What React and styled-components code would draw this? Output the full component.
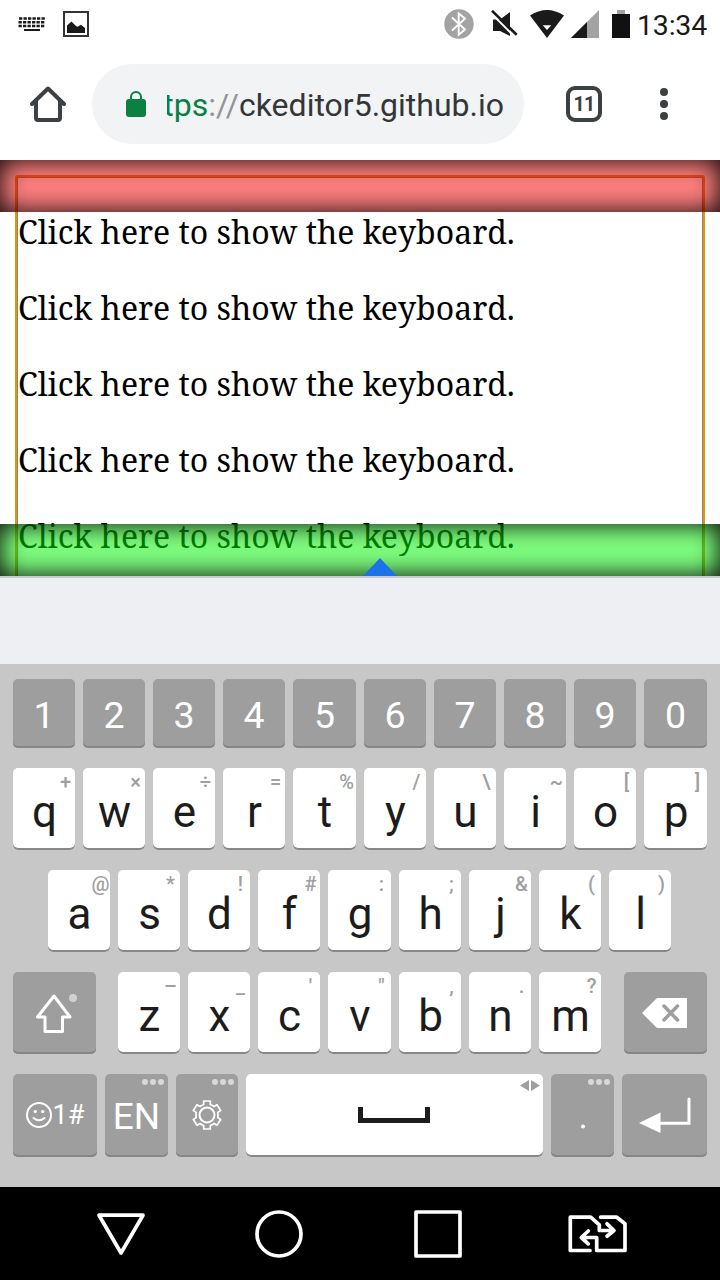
import React from "react";
import styled, { createGlobalStyle, css } from "styled-components";

const GlobalStyle = createGlobalStyle`
  *, *::before, *::after { box-sizing: border-box; }
  body { margin: 0; background: #fff; font-family: Roboto, sans-serif; }
  svg { display: block; flex: none; }
`;

const Screen = styled.div`
  width: 720px;
  height: 1280px;
  display: flex;
  flex-direction: column;
  overflow: hidden;
`;

const StatusBar = styled.header`
  height: 48px;
  display: flex;
  align-items: center;
  justify-content: space-between;
  padding: 0 12px 0 18px;
  color: #1a1a1a;
`;

const Notifications = styled.div`
  display: flex;
  align-items: center;
  gap: 17px;
`;

const SystemIcons = styled.div`
  display: flex;
  align-items: center;
`;

const IconGap = styled.span`
  width: ${(p) => p.$w}px;
`;

const Clock = styled.time`
  margin-left: 7px;
  font-size: 28.5px;
  line-height: 48px;
  height: 48px;
  width: 71px;
  padding-top: 1.5px;
  white-space: nowrap;
  letter-spacing: -0.2px;
`;

const Toolbar = styled.nav`
  height: 112px;
  display: flex;
  align-items: center;
  padding: 0 50px 0 30px;
`;

const AddressBar = styled.div`
  width: 432px;
  height: 80px;
  margin-left: 26px;
  padding: 0 20px 0 34px;
  border-radius: 40px;
  background: #f1f3f4;
  display: flex;
  align-items: center;
`;

const Url = styled.div`
  width: 337px;
  margin-left: 21px;
  overflow: hidden;
  display: flex;
  justify-content: flex-end;
  font-size: 32px;
  line-height: 44px;
  padding-top: 2px;
  color: #333639;
  white-space: nowrap;
`;

const Scheme = styled.span`
  color: #0b8043;
`;

const Slashes = styled.span`
  color: #919395;
`;

const TabCount = styled.div`
  width: 36px;
  height: 36px;
  margin-left: 42px;
  border: 4px solid #3c4043;
  border-radius: 9px;
  color: #3c4043;
  font-size: 19.5px;
  font-weight: 700;
  letter-spacing: -0.8px;
  line-height: 29px;
  text-align: center;
`;

const Menu = styled.div`
  margin-left: 58px;
  display: flex;
  flex-direction: column;
  gap: 4px;
`;

const MenuDot = styled.span`
  width: 8px;
  height: 8px;
  border-radius: 50%;
  background: #3c4043;
`;

const Page = styled.main`
  position: relative;
  height: 416px;
  padding: 15px 15px 0;
  overflow: hidden;
`;

const Editable = styled.div`
  height: 480px;
  border: 2px solid #e59700;
  border-radius: 3px;
  box-shadow: inset 0 0 0 1px #858585;
  padding: 33px 1px 0;
`;

const Paragraph = styled.p`
  margin: 0 0 32px;
  height: 44px;
  font-family: "Noto Serif", "Droid Serif", "DejaVu Serif Condensed", "DejaVu Serif", serif;
  font-size: 32px;
  line-height: 44px;
  color: #000;
  white-space: nowrap;
`;

const Band = styled.div`
  position: absolute;
  left: 0;
  right: 0;
  height: 52px;
  ${(p) => (p.$edge === "top" ? "top: 0;" : "bottom: 0;")}
  background: ${(p) => p.$color};
  box-shadow: inset 0 0 26px #000;
`;

const Handle = styled.svg`
  position: absolute;
  left: 363px;
  bottom: 0;
`;

const Suggestions = styled.div`
  height: 88px;
  border-top: 2px solid #c9c9d1;
  background: #eeeff3;
`;

const Keyboard = styled.section`
  height: 523px;
  padding: 15px 13px 0;
  background: #c7c7c7;
  display: flex;
  flex-direction: column;
  gap: 20px;
`;

const KeyRow = styled.div`
  display: grid;
  grid-template-columns: ${(p) => p.$columns || "repeat(4, 62px) 63px repeat(4, 62px) 63px"};
  column-gap: 8px;
  height: ${(p) => p.$height || 82}px;
  padding-left: ${(p) => p.$indent || 0}px;
`;

const Key = styled.div`
  position: relative;
  display: flex;
  align-items: center;
  justify-content: center;
  border-radius: 5px;
  background: #fff;
  color: #1c1c1c;
  box-shadow: inset 0 -2px 0 #888;
  font-size: 44px;
  line-height: 48px;
  padding: 6px 0 0 1px;
  ${(p) =>
    p.$dark &&
    css`
      background: #9e9e9e;
      color: #fff;
      box-shadow: inset 0 -2px 0 #868686;
      font-size: ${p.$size || 37.5}px;
      padding: 2px 0 0;
    `}
  ${(p) =>
    p.$icon &&
    css`
      padding: 0 ${p.$right || 0}px 1px ${p.$left || 0}px;
    `}
`;

const Hint = styled.span`
  position: absolute;
  top: 2px;
  right: -0.5px;
  width: 20px;
  display: flex;
  justify-content: center;
  font-size: 20px;
  line-height: 24px;
  font-weight: 500;
  color: #a0a0a0;
`;

const Dots = styled.span`
  position: absolute;
  top: 5px;
  right: 4px;
  display: flex;
  gap: 2px;
`;

const Dot = styled.i`
  width: 6px;
  height: 6px;
  border-radius: 50%;
  background: #d9d9d9;
`;

const SpaceArrows = styled.svg`
  position: absolute;
  top: 6px;
  right: 3px;
`;

const SymbolLabel = styled.span`
  margin-left: 1px;
  font-size: 27px;
  font-weight: 400;
`;

const NavBar = styled.footer`
  height: 93px;
  background: #000;
  display: flex;
  align-items: center;
  padding-left: 96px;
`;

const NavSvg = styled.svg`
  margin-right: ${(p) => p.$after || 0}px;
`;

const digits = "1234567890".split("");
const topRow = [["q", "+"], ["w", "×"], ["e", "÷"], ["r", "="], ["t", "%"], ["y", "/"], ["u", "\\"], ["i", "~"], ["o", "["], ["p", "]"]];
const homeRow = [["a", "@"], ["s", "*"], ["d", "!"], ["f", "#"], ["g", ":"], ["h", ";"], ["j", "&"], ["k", "("], ["l", ")"]];
const bottomRow = [["z", "–"], ["x", "_"], ["c", "'"], ["v", '"'], ["b", ","], ["n", "."], ["m", "?"]];

const LetterKey = ({ letter, hint }) => (
  <Key>
    {letter}
    <Hint>{hint}</Hint>
  </Key>
);

const MoreDots = () => (
  <Dots>
    <Dot />
    <Dot />
    <Dot />
  </Dots>
);

const KeyboardIcon = () => (
  <svg width="28" height="16" viewBox="0 0 28 16">
    <path d="M1 2.5h27M.5 6.2h27M.5 10h27" stroke="#1a1a1a" strokeWidth="2.6" strokeDasharray="3.3 1.2" />
    <path d="M6 14h16" stroke="#1a1a1a" strokeWidth="2" />
  </svg>
);

const PictureIcon = () => (
  <svg width="26" height="26" viewBox="0 0 26 26">
    <rect x="1" y="1" width="24" height="24" fill="none" stroke="#333" strokeWidth="2" />
    <path d="M4 22v-7.500L8.500 10.500l4.500 4.500 1.500.8 3.500-2 4 3.200V22z" fill="#1a1a1a" />
  </svg>
);

const BluetoothIcon = () => (
  <svg width="30" height="30" viewBox="0 0 30 30">
    <circle cx="15" cy="15" r="14.700" fill="#a3a3a3" />
    <path d="M8 8.500l13 12-6.300 5.200V4.500L21 9.600 8 21.500" fill="none" stroke="#fff" strokeWidth="1.900" />
  </svg>
);

const MuteIcon = () => (
  <svg width="27" height="28" viewBox="0 0 27 28">
    <path d="M2 9.500H9L19 2V26L9 21H2z" fill="#1a1a1a" />
    <path d="M-2 1.200L24 27.200" stroke="#fff" strokeWidth="2" />
    <path d="M1 .8L25.700 24.800" stroke="#1a1a1a" strokeWidth="2.600" />
  </svg>
);

const WifiIcon = () => (
  <svg width="34" height="28" viewBox="0 0 34 28">
    <path d="M0 5.500Q17-5.500 34 5.500L17 28z" fill="#1a1a1a" />
    <path d="M12.800 15.300H21.200L17 20z" fill="#fff" />
  </svg>
);

const SignalIcon = () => (
  <svg width="28" height="28" viewBox="0 0 28 28">
    <path d="M28 0v28H0z" fill="#a3a3a3" />
    <path d="M16 12v16H0z" fill="#1a1a1a" />
  </svg>
);

const BatteryIcon = () => (
  <svg width="18" height="28" viewBox="0 0 18 28">
    <path d="M5 0h8v4H5z" fill="#a3a3a3" />
    <path d="M0 4h18v24H0z" fill="#111" />
  </svg>
);

const HomeIcon = () => (
  <svg width="36" height="36" viewBox="0 0 36 36">
    <path d="M2 18L18 2.500 34 18M6 15.500V32q0 2 2 2h20q2 0 2-2V15.500" fill="none" stroke="#3c4043" strokeWidth="4" strokeLinejoin="round" strokeLinecap="round" />
  </svg>
);

const LockIcon = () => (
  <svg width="20" height="26" viewBox="0 0 20 26">
    <rect y="8" width="20" height="18" rx="3" fill="#0b8043" />
    <path d="M5 9V6a5 5 0 0 1 10 0v3" fill="none" stroke="#0b8043" strokeWidth="2" />
  </svg>
);

const ShiftIcon = () => (
  <svg width="44" height="42" viewBox="0 0 44 42">
    <path d="M19 4L2.500 25H10v14.500h17.500V25H35z" fill="none" stroke="#fff" strokeWidth="3" strokeLinejoin="round" />
    <circle cx="38" cy="6" r="4" fill="#d0d0d0" />
  </svg>
);

const BackspaceIcon = () => (
  <svg width="45" height="30" viewBox="0 0 45 30">
    <path d="M0 15L15 0h30v30H15z" fill="#fff" />
    <path d="M22 8L35.500 22M35.500 8L22 22" stroke="#9e9e9e" strokeWidth="3.500" strokeLinecap="round" />
  </svg>
);

const SmileIcon = () => (
  <svg width="26" height="26" viewBox="0 0 26 26">
    <circle cx="13" cy="13" r="12" fill="none" stroke="#fff" strokeWidth="2" />
    <circle cx="9.300" cy="9.600" r="1.700" fill="#fff" />
    <circle cx="16.700" cy="9.600" r="1.700" fill="#fff" />
    <path d="M7.500 16q5.500 4.500 11 0" fill="none" stroke="#fff" strokeWidth="2" strokeLinecap="round" />
  </svg>
);

const GearIcon = () => (
  <svg width="30" height="30" viewBox="0 0 30 30">
    <path d="M11.700 1h6.600v3.500q2.200.7 3.700 2L25 4.700 28.700 10.500 25.800 12.400q.5 2.600 0 5.200l2.900 1.900L25 25.300l-3-1.800q-1.500 1.300-3.700 2V29h-6.600v-3.500q-2.200-.7-3.700-2l-3 1.800L1.300 19.500l2.900-1.900q-.5-2.600 0-5.200L1.300 10.500 5 4.700l3 1.800q1.500-1.300 3.700-2z" fill="none" stroke="#fff" strokeWidth="1.700" strokeLinejoin="round" />
    <circle cx="15" cy="15" r="7.500" fill="none" stroke="#fff" strokeWidth="2" />
  </svg>
);

const SpaceIcon = () => (
  <svg width="72" height="16" viewBox="0 0 72 16">
    <path d="M2.500 0v13.500h67V0" fill="none" stroke="#1c1c1c" strokeWidth="5" />
  </svg>
);

const EnterIcon = () => (
  <svg width="52" height="36" viewBox="0 0 52 36">
    <path d="M50 2v24.300H19" fill="none" stroke="#fff" strokeWidth="3" strokeLinecap="round" />
    <path d="M0 26L21.500 15.500v20.500z" fill="#fff" />
  </svg>
);

const PeriodIcon = () => (
  <svg width="4" height="28" viewBox="0 0 4 28">
    <circle cx="2" cy="25.500" r="2" fill="#fff" />
  </svg>
);

const NavIcon = ({ width = 50, after, children }) => (
  <NavSvg $after={after} width={width} height="50" viewBox={`0 0 ${width} 50`} fill="none" stroke="#fff" strokeWidth="3.700" strokeLinejoin="round" strokeLinecap="round">
    {children}
  </NavSvg>
);

export default function App() {
  return (
    <Screen>
      <GlobalStyle />
      <StatusBar>
        <Notifications>
          <KeyboardIcon />
          <PictureIcon />
        </Notifications>
        <SystemIcons>
          <BluetoothIcon />
          <IconGap $w={17} />
          <MuteIcon />
          <IconGap $w={12} />
          <WifiIcon />
          <IconGap $w={7} />
          <SignalIcon />
          <IconGap $w={13} />
          <BatteryIcon />
          <Clock>13:34</Clock>
        </SystemIcons>
      </StatusBar>
      <Toolbar>
        <HomeIcon />
        <AddressBar>
          <LockIcon />
          <Url>
            <Scheme>https</Scheme>
            <Slashes>://</Slashes>
            <span>ckeditor5.github.io</span>
          </Url>
        </AddressBar>
        <TabCount>11</TabCount>
        <Menu>
          <MenuDot />
          <MenuDot />
          <MenuDot />
        </Menu>
      </Toolbar>
      <Page>
        <Editable>
          {[0, 1, 2, 3, 4].map((n) => (
            <Paragraph key={n}>Click here to show the keyboard.</Paragraph>
          ))}
        </Editable>
        <Band $edge="top" $color="rgba(255, 0, 0, 0.5)" />
        <Band $edge="bottom" $color="rgba(0, 255, 0, 0.5)" />
        <Handle width="34" height="18" viewBox="0 0 34 18">
          <path d="M0 18L17 0l17 18z" fill="#1a73e8" />
        </Handle>
      </Page>
      <Suggestions />
      <Keyboard>
        <KeyRow $height={69}>
          {digits.map((d) => (
            <Key $dark key={d}>{d}</Key>
          ))}
        </KeyRow>
        <KeyRow>
          {topRow.map(([l, h]) => (
            <LetterKey key={l} letter={l} hint={h} />
          ))}
        </KeyRow>
        <KeyRow $columns="repeat(4, 62px) 63px repeat(4, 62px)" $indent={35}>
          {homeRow.map(([l, h]) => (
            <LetterKey key={l} letter={l} hint={h} />
          ))}
        </KeyRow>
        <KeyRow $columns="83px 6px repeat(3, 62px) 63px repeat(3, 62px) 7px 83px">
          <Key $dark $icon $left={4}><ShiftIcon /></Key>
          <span />
          {bottomRow.map(([l, h]) => (
            <LetterKey key={l} letter={l} hint={h} />
          ))}
          <span />
          <Key $dark $icon $right={2}><BackspaceIcon /></Key>
        </KeyRow>
        <KeyRow $columns="84px 63px 62px 297px 63px 85px" $height={83}>
          <Key $dark $icon>
            <SmileIcon />
            <SymbolLabel>1#</SymbolLabel>
          </Key>
          <Key $dark $size={37}>
            EN
            <MoreDots />
          </Key>
          <Key $dark $icon>
            <GearIcon />
            <MoreDots />
          </Key>
          <Key $icon $right={1}>
            <SpaceIcon />
            <SpaceArrows width="20" height="11" viewBox="0 0 20 11">
              <path d="M9 0v11L0 5.500zM11 0v11l9-5.500z" fill="#a0a0a0" />
            </SpaceArrows>
          </Key>
          <Key $dark $icon>
            <PeriodIcon />
            <MoreDots />
          </Key>
          <Key $dark $icon $left={1}><EnterIcon /></Key>
        </KeyRow>
      </Keyboard>
      <NavBar>
        <NavIcon after={108}>
          <path d="M3 6.200h44L25 44z" />
        </NavIcon>
        <NavIcon after={109}>
          <circle cx="25" cy="25" r="22" />
        </NavIcon>
        <NavIcon after={103}>
          <rect x="3" y="3" width="44" height="44" />
        </NavIcon>
        <NavIcon width={62}>
          <path d="M24 41.500H4.300V8.200H24.700L33.300 15.800V21.500H47M41 14.800L48 21.500 41 27.200M34.700 8.200H50.700L59 14.800V41.500H30.700V28.500H16M22.300 22L15.300 28.500 22.300 34.800" />
        </NavIcon>
      </NavBar>
    </Screen>
  );
}
